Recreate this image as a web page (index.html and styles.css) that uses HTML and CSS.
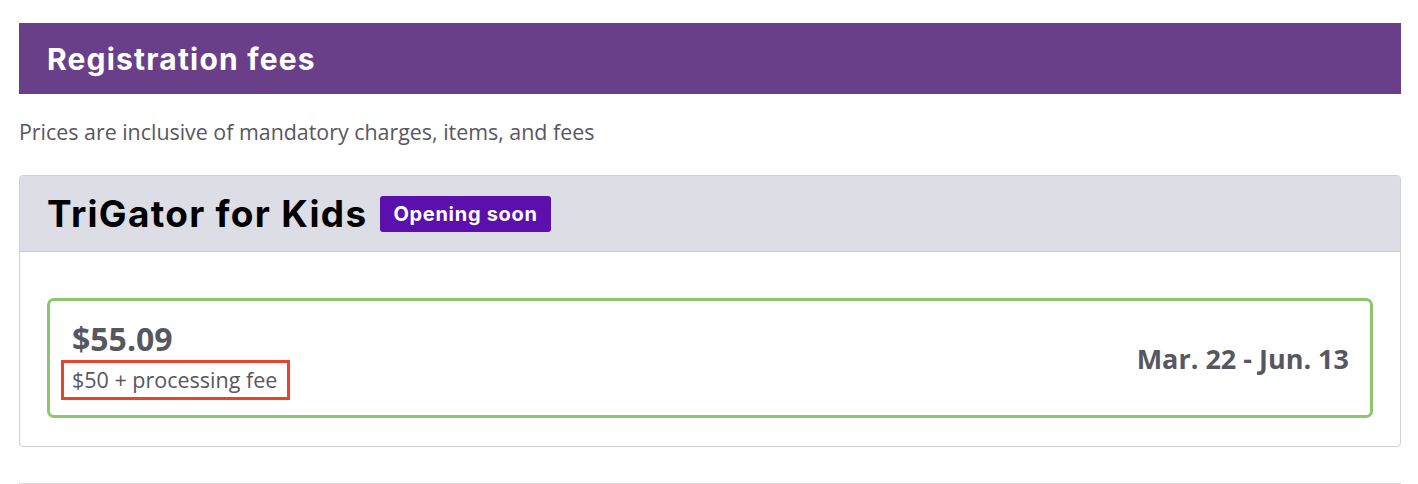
FILE: index.html
```html
<!DOCTYPE html>
<html lang="en">
<head>
<meta charset="utf-8">
<title>Registration fees</title>
<link rel="stylesheet" href="styles.css">
</head>
<body>
<main class="page">
  <h2 class="section-title">Registration fees</h2>
  <p class="note">Prices are inclusive of mandatory charges, items, and fees</p>
  <section class="event-card">
    <header class="event-head">
      <h3 class="event-name">TriGator for Kids</h3>
      <span class="badge">Opening soon</span>
    </header>
    <div class="event-body">
      <div class="price-box">
        <div class="price-info">
          <div class="price">$55.09</div>
          <div class="price-detail">$50 + processing fee</div>
        </div>
        <div class="dates">Mar. 22 - Jun. 13</div>
      </div>
    </div>
  </section>
  <hr class="divider">
</main>
</body>
</html>
```

FILE: styles.css
```css
html, body {
  margin: 0;
  padding: 0;
  background: #ffffff;
}
.page {
  padding: 23px 17px 0 19px;
  font-family: "Open Sans", "Liberation Sans", sans-serif;
  color: #57575f;
}
.section-title {
  margin: 0;
  height: 71px;
  box-sizing: border-box;
  padding: 0 28px;
  display: flex;
  align-items: center;
  background: #6a3f89;
  color: #ffffff;
  font-family: Inter, "Liberation Sans", sans-serif;
  font-weight: 700;
  font-size: 30px;
  letter-spacing: 1.2px;
}
.note {
  margin: 23px 0 0;
  font-size: 21.4px;
  line-height: 30px;
  color: #57575f;
}
.event-card {
  margin-top: 28px;
  border: 1px solid #cfcfd4;
  border-radius: 4px;
  overflow: hidden;
}
.event-head {
  display: flex;
  align-items: center;
  gap: 13px;
  height: 76px;
  box-sizing: border-box;
  padding: 0 27px;
  background: #dcdde5;
  border-bottom: 1px solid #c9c9cf;
}
.event-name {
  margin: 0;
  font-family: Inter, "Liberation Sans", sans-serif;
  font-weight: 700;
  font-size: 37px;
  letter-spacing: 1.3px;
  color: #000000;
}
.badge {
  display: inline-flex;
  align-items: center;
  height: 36px;
  padding: 0 13px;
  background: #5b10ae;
  border-radius: 3px;
  color: #ffffff;
  font-family: Inter, "Liberation Sans", sans-serif;
  font-weight: 700;
  font-size: 20px;
  letter-spacing: 0.7px;
}
.event-body {
  padding: 46px 27px 28px;
}
.price-box {
  display: flex;
  align-items: center;
  justify-content: space-between;
  height: 120px;
  box-sizing: border-box;
  padding: 0 21px 0 22px;
  border: 3px solid #8cc770;
  border-radius: 7px;
}
.price-info {
  display: flex;
  flex-direction: column;
  align-items: flex-start;
  padding-top: 4px;
}
.price {
  font-size: 32px;
  font-weight: 700;
  line-height: 38px;
  color: #57575f;
}
.price-detail {
  margin-top: 2px;
  margin-left: -11px;
  padding: 0 10px 0 8px;
  border: 3px solid #e8432b;
  font-size: 21.5px;
  line-height: 34px;
  color: #57575f;
}
.dates {
  font-size: 27px;
  font-weight: 700;
  color: #57575f;
}
.divider {
  margin: 36px 0 0;
  border: 0;
  border-top: 1px solid #dddde0;
}
```
